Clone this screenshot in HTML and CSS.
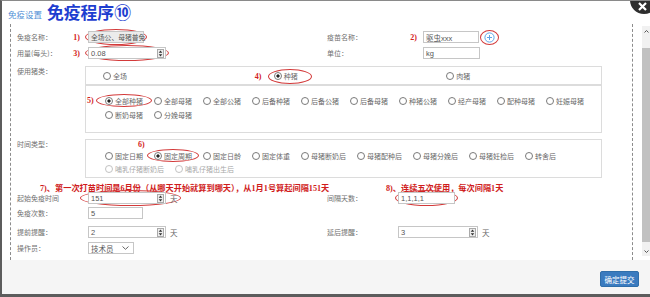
FILE: index.html
```html
<!DOCTYPE html>
<html lang="zh">
<head>
    <meta charset="UTF-8">
    <meta name="viewport" content="width=device-width, initial-scale=1.0">
    <title>免疫程序</title>
    <link rel="stylesheet" href="styles.css">
</head>
<body>
    <div class="modal">
        <div class="modal-head">
            <span class="crumb">免疫设置</span>
            <h1 class="title">免疫程序⑩</h1>
            <a class="close"><svg width="9" height="9" viewBox="0 0 9 9"><path d="M1 1L8 8M8 1L1 8" stroke="#fff" stroke-width="2.2"/></svg></a>
        </div>

        <div class="modal-body">
            <div class="form-wrap">
                <div class="row">
                    <div class="col-l">
                        <label class="lbl">免疫名称：<b class="mk">1)</b></label>
                        <span class="ring"><span class="ipt w56 disabled">全场公、母猪普免</span></span>
                    </div>
                    <div class="col-r">
                        <label class="lbl wide">疫苗名称：<b class="mk">2)</b></label>
                        <span class="ipt w56">驱虫xxx</span>
                        <span class="ring plus-ring">
                            <svg width="11" height="11" viewBox="0 0 11 11"><circle cx="5.5" cy="5.5" r="4.6" fill="#fff" stroke="#5ea6e8" stroke-width="1"/><path d="M5.5 3v5M3 5.5h5" stroke="#5ea6e8" stroke-width="1"/></svg>
                        </span>
                    </div>
                </div>

                <div class="row">
                    <div class="col-l">
                        <label class="lbl">用量(每头)：<b class="mk">3)</b></label>
                        <span class="ring">
                            <span class="ipt num w78">0.08<svg class="spin" width="7" height="9" viewBox="0 0 7 9"><rect x=".5" y=".5" width="6" height="8" fill="#eee" stroke="#aaa"/><path d="M3.5 1.6L5.3 3.7H1.7ZM3.5 7.4L5.3 5.3H1.7Z" fill="#333"/></svg></span>
                        </span>
                    </div>
                    <div class="col-r">
                        <label class="lbl wide">单位：</label>
                        <span class="ipt w57">kg</span>
                    </div>
                </div>

                <div class="row-box pig">
                    <label class="lbl top">使用猪类：</label>
                    <div class="box">
                        <div class="pig-top">
                            <div class="pt-col"><span class="rd">全场</span></div>
                            <div class="pt-col mid"><b class="mk">4)</b><span class="rd on circled c-zhu">种猪</span></div>
                            <div class="pt-col"><span class="rd">肉猪</span></div>
                        </div>
                        <div class="pig-bot">
                            <b class="mk side">5)</b>
                            <div class="opts">
                                <span class="rd on circled c-all">全部种猪</span>
                                <span class="rd">全部母猪</span>
                                <span class="rd">全部公猪</span>
                                <span class="rd">后备种猪</span>
                                <span class="rd">后备公猪</span>
                                <span class="rd">后备母猪</span>
                                <span class="rd">种猪公猪</span>
                                <span class="rd">经产母猪</span>
                                <span class="rd">配种母猪</span>
                                <span class="rd">妊娠母猪</span>
                                <span class="rd">断奶母猪</span>
                                <span class="rd">分娩母猪</span>
                            </div>
                        </div>
                    </div>
                </div>

                <div class="row-box time">
                    <label class="lbl top">时间类型：</label>
                    <div class="box tbox">
                        <div class="t-mk"><b class="mk">6)</b></div>
                        <div class="opts tight">
                            <span class="rd">固定日期</span>
                            <span class="rd on circled c-zq">固定周期</span>
                            <span class="rd">固定日龄</span>
                            <span class="rd">固定体重</span>
                            <span class="rd">母猪断奶后</span>
                            <span class="rd">母猪配种后</span>
                            <span class="rd">母猪分娩后</span>
                            <span class="rd">母猪妊检后</span>
                            <span class="rd">转舍后</span>
                            <span class="rd off">哺乳仔猪断奶后</span>
                            <span class="rd off">哺乳仔猪出生后</span>
                        </div>
                    </div>
                </div>

                <div class="note-row">
                    <span class="note">7)、第一次打苗时间是6月份（从哪天开始就算到哪天），从1月1号算起间隔151天</span>
                    <span class="note">8)、连续五次使用，每次间隔1天</span>
                </div>

                <div class="row r-e">
                    <div class="col-l">
                        <label class="lbl">起始免疫时间</label>
                        <span class="ring long">
                            <span class="ipt num w78">151<svg class="spin" width="7" height="9" viewBox="0 0 7 9"><rect x=".5" y=".5" width="6" height="8" fill="#eee" stroke="#aaa"/><path d="M3.5 1.6L5.3 3.7H1.7ZM3.5 7.4L5.3 5.3H1.7Z" fill="#333"/></svg></span>
                            <span class="unit">天</span>
                        </span>
                    </div>
                    <div class="col-r">
                        <label class="lbl">间隔天数：</label>
                        <span class="ring"><span class="ipt w57">1,1,1,1</span></span>
                    </div>
                </div>

                <div class="row">
                    <div class="col-l">
                        <label class="lbl">免疫次数：</label>
                        <span class="ipt plain w55">5</span>
                    </div>
                </div>

                <div class="row r-g">
                    <div class="col-l">
                        <label class="lbl">提前提醒：</label>
                        <span class="ipt plain num w78">2<svg class="spin" width="7" height="9" viewBox="0 0 7 9"><rect x=".5" y=".5" width="6" height="8" fill="#eee" stroke="#aaa"/><path d="M3.5 1.6L5.3 3.7H1.7ZM3.5 7.4L5.3 5.3H1.7Z" fill="#333"/></svg></span>
                        <span class="unit">天</span>
                    </div>
                    <div class="col-r">
                        <label class="lbl">延后提醒：</label>
                        <span class="ipt plain num w80">3<svg class="spin" width="7" height="9" viewBox="0 0 7 9"><rect x=".5" y=".5" width="6" height="8" fill="#eee" stroke="#aaa"/><path d="M3.5 1.6L5.3 3.7H1.7ZM3.5 7.4L5.3 5.3H1.7Z" fill="#333"/></svg></span>
                        <span class="unit">天</span>
                    </div>
                </div>

                <div class="row">
                    <div class="col-l">
                        <label class="lbl">操作员：</label>
                        <span class="ipt plain sel w46">技术员<svg width="7" height="4" viewBox="0 0 7 4"><path d="M.5 .5L3.5 3.3L6.5 .5" fill="none" stroke="#666" stroke-width="1"/></svg></span>
                    </div>
                </div>
            </div>

            <div class="scroll">
                <span class="sb-arrow"><svg width="5" height="3" viewBox="0 0 5 3"><path d="M.5 2.5L2.5 .5L4.5 2.5" fill="none" stroke="#555" stroke-width="1"/></svg></span>
                <span class="sb-thumb"></span>
                <span class="sb-arrow"><svg width="5" height="3" viewBox="0 0 5 3"><path d="M.5 .5L2.5 2.5L4.5 .5" fill="none" stroke="#555" stroke-width="1"/></svg></span>
            </div>
        </div>

        <div class="modal-foot">
            <button class="btn">确定提交</button>
        </div>
    </div>
</body>
</html>
```

FILE: styles.css
```css
* {
    box-sizing: border-box;
}
body {
    margin: 0;
    font-family: "Noto Sans CJK SC", sans-serif;
    font-size: 7px;
    color: #707070;
    background: #fff;
}
.modal {
    position: relative;
    width: 650px;
    height: 297px;
    border-top: 1px solid #8a8a8a;
    border-left: 2px solid #5c5c5c;
    border-bottom: 3px solid #5c5c5c;
    display: flex;
    flex-direction: column;
    overflow: hidden;
}
.modal-head {
    height: 23px;
    display: flex;
    align-items: center;
    gap: 5px;
    padding-left: 6px;
}
.crumb {
    color: #4f8fd6;
    font-size: 8.5px;
    margin-top: 2px;
}
.title {
    margin: 0;
    color: #1e3ed0;
    font-size: 16.8px;
    font-weight: 700;
    line-height: 1;
}
.close {
    position: absolute;
    top: -15px;
    right: -8px;
    width: 28px;
    height: 28px;
    border-radius: 50%;
    background: #2e2e2e;
    display: flex;
    align-items: flex-end;
    justify-content: center;
    padding: 0 4px 3px 0;
}
.close svg {
    display: block;
}

.modal-body {
    height: 236px;
    display: flex;
}
.form-wrap {
    width: 623px;
    margin-left: 8px;
    border-left: 1px dashed #8c8c8c;
    border-right: 1px dashed #8c8c8c;
    padding: 5px 0 0 6px;
}

.row {
    display: flex;
    align-items: center;
    height: 16px;
}
.col-l {
    width: 310px;
    display: flex;
    align-items: center;
}
.col-r {
    display: flex;
    align-items: center;
}
.lbl {
    width: 68px;
    flex-shrink: 0;
    display: flex;
    justify-content: space-between;
    align-items: center;
    padding-right: 5px;
    white-space: nowrap;
}
.lbl.wide {
    width: 96px;
    padding-right: 6px;
}
.lbl.top {
    align-self: flex-start;
    height: 10px;
}
.mk {
    color: #d42222;
    font: bold 8px "Liberation Serif", "Noto Sans CJK SC", serif;
}

.ipt {
    display: inline-flex;
    align-items: center;
    height: 12px;
    border: 1px solid #c6c6c6;
    padding: 0 2px;
    font: 7.5px "Liberation Sans", "Noto Sans CJK SC", sans-serif;
    color: #555;
    background: #fff;
    white-space: nowrap;
}
.ipt.disabled {
    background: #ececec;
    font-size: 6.8px;
}
.ipt.plain {
    margin-left: 3px;
}
.ipt.num,
.ipt.sel {
    justify-content: space-between;
    padding-right: 1px;
}
.ipt.sel {
    padding-right: 4px;
}
.spin {
    display: block;
}
.w46 { width: 46px; }
.w55 { width: 55px; }
.w56 { width: 56px; }
.w57 { width: 57px; }
.w78 { width: 78px; }
.w80 { width: 80px; }
.unit {
    margin-left: 4px;
    font-size: 7.5px;
    color: #666;
}

.ring {
    display: inline-flex;
    align-items: center;
    border: 1px solid #d33a3a;
    border-radius: 50%;
    padding: 1px 2px;
}
.ring.long {
    margin-left: -5px;
    padding-left: 7px;
}
.ring.plus-ring {
    width: 19px;
    height: 15px;
    margin-left: 1px;
    padding: 0;
    justify-content: center;
}
.ring.plus-ring svg {
    display: block;
}

.row-box {
    display: flex;
}
.row-box.pig {
    margin-top: 5px;
}
.row-box.time {
    margin-top: 6px;
}
.box {
    width: 517px;
    border: 1px solid #dcdcdc;
}
.pig-top {
    height: 19px;
    border-bottom: 2px solid #dcdcdc;
    display: grid;
    grid-template-columns: repeat(3, 1fr);
    align-items: center;
}
.pt-col {
    display: flex;
    align-items: center;
    padding-left: 17px;
}
.pt-col.mid {
    padding-left: 0;
}
.pt-col.mid .mk {
    width: 19px;
    margin-left: -3px;
    padding-top: 1px;
}
.pig-bot {
    height: 46px;
    display: flex;
}
.mk.side {
    width: 19px;
    flex-shrink: 0;
    padding: 8px 0 0 1px;
    line-height: 14px;
}
.opts {
    flex: 1;
    display: flex;
    flex-wrap: wrap;
    align-content: flex-start;
    padding-top: 8px;
}
.opts .rd {
    height: 14px;
    margin-right: 11px;
}
.tbox .t-mk {
    height: 9px;
    line-height: 9px;
    padding-left: 52px;
}
.opts.tight {
    padding: 0 0 2px 19px;
}
.opts.tight .rd {
    height: 13px;
}

.rd {
    position: relative;
    display: inline-flex;
    align-items: center;
    gap: 2px;
    height: 10px;
    color: #6a6a6a;
    white-space: nowrap;
}
.rd::before {
    content: "";
    width: 6px;
    height: 6px;
    border: 1px solid #7a7a7a;
    border-radius: 50%;
    background: #fff;
}
.rd.on::before {
    background: radial-gradient(circle, #222 0 1.4px, #fff 1.8px);
}
.rd.off {
    color: #a8a8a8;
}
.rd.off::before {
    border-color: #c2c2c2;
}
.circled::after {
    content: "";
    position: absolute;
    border: 1px solid #d33a3a;
    border-radius: 50%;
}
.c-zhu::after {
    inset: -1.5px -14px -3.5px -6px;
}
.c-all::after {
    inset: 0 -9px 1px -9px;
}
.c-zq::after {
    inset: 0 -7px 0 -7px;
}

.note-row {
    display: grid;
    grid-template-columns: 346px auto;
    align-items: center;
    height: 10px;
    margin-top: 3px;
    padding-left: 23px;
}
.note {
    color: #d01c1c;
    font: bold 8.2px "Liberation Serif", "Noto Sans CJK SC", serif;
    white-space: nowrap;
}
.row.r-e {
    height: 14px;
}
.row.r-g {
    margin-top: 3px;
}

.scroll {
    width: 8px;
    margin: 2px 0 4px 9px;
    display: flex;
    flex-direction: column;
    background: #f1f1f1;
}
.sb-arrow {
    height: 10px;
    display: flex;
    align-items: center;
    justify-content: center;
}
.sb-thumb {
    flex: 1;
    margin: 12px 0 4px;
    background: #c1c1c1;
}

.modal-foot {
    flex: 1;
    background: #f5f5f5;
    display: flex;
    justify-content: flex-end;
    align-items: center;
    padding: 4px 11px 0 0;
}
.btn {
    width: 39px;
    height: 16px;
    padding: 0;
    border: 1px solid #2f6ea9;
    border-radius: 2px;
    background: #3a7bbf;
    color: #fff;
    font: 7.5px "Noto Sans CJK SC", sans-serif;
}
```
